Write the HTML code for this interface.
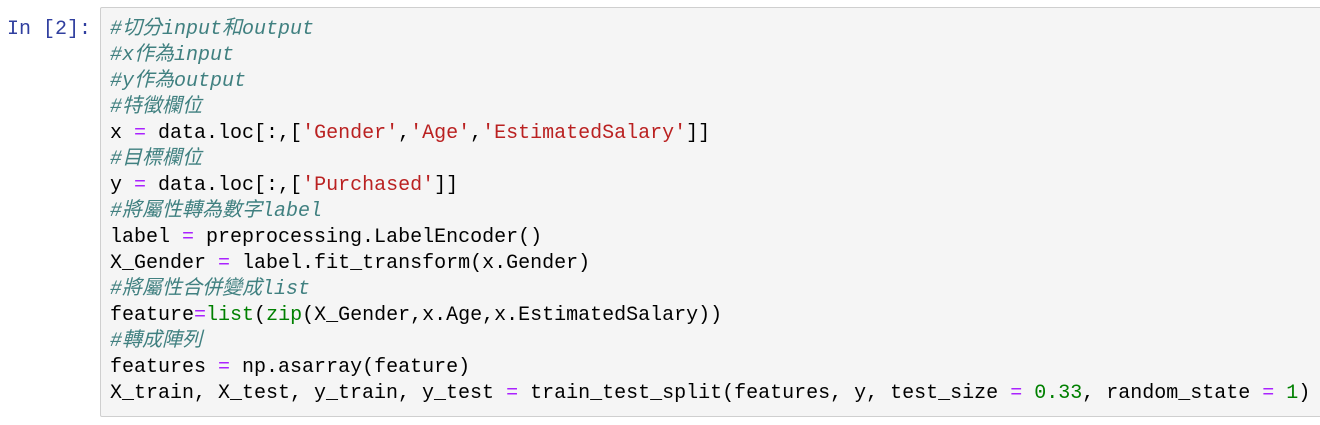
<!DOCTYPE html>
<html><head><meta charset="utf-8"><style>
body{margin:0;background:#fff;width:1320px;height:425px;overflow:hidden;position:relative;font-family:"Liberation Mono","Noto Sans CJK TC",monospace;}
.p{position:absolute;left:7px;top:17px;font-size:20px;line-height:26px;color:#303f9f;}
.box{position:absolute;left:100px;top:7px;width:1240px;height:410px;background:#f5f5f5;border:1px solid #cfcfcf;border-radius:2px;box-sizing:border-box;}
pre{position:absolute;left:110px;top:17px;margin:0;font-family:"Liberation Mono","Noto Sans CJK TC",monospace;font-size:20px;line-height:26px;color:#000;}
.c{color:#408080;font-style:italic}.s{color:#BA2121}.o{color:#AA22FF}.n{color:#008000}
</style></head><body>
<div class="p">In [2]:</div>
<div class="box"></div>
<pre><span class="c">#切分input和output</span>
<span class="c">#x作為input</span>
<span class="c">#y作為output</span>
<span class="c">#特徵欄位</span>
x <span class="o">=</span> data.loc[:,[<span class="s">'Gender'</span>,<span class="s">'Age'</span>,<span class="s">'EstimatedSalary'</span>]]
<span class="c">#目標欄位</span>
y <span class="o">=</span> data.loc[:,[<span class="s">'Purchased'</span>]]
<span class="c">#將屬性轉為數字label</span>
label <span class="o">=</span> preprocessing.LabelEncoder()
X_Gender <span class="o">=</span> label.fit_transform(x.Gender)
<span class="c">#將屬性合併變成list</span>
feature<span class="o">=</span><span class="n">list</span>(<span class="n">zip</span>(X_Gender,x.Age,x.EstimatedSalary))
<span class="c">#轉成陣列</span>
features <span class="o">=</span> np.asarray(feature)
X_train, X_test, y_train, y_test <span class="o">=</span> train_test_split(features, y, test_size <span class="o">=</span> <span class="n">0.33</span>, random_state <span class="o">=</span> <span class="n">1</span>)</pre>
</body></html>
